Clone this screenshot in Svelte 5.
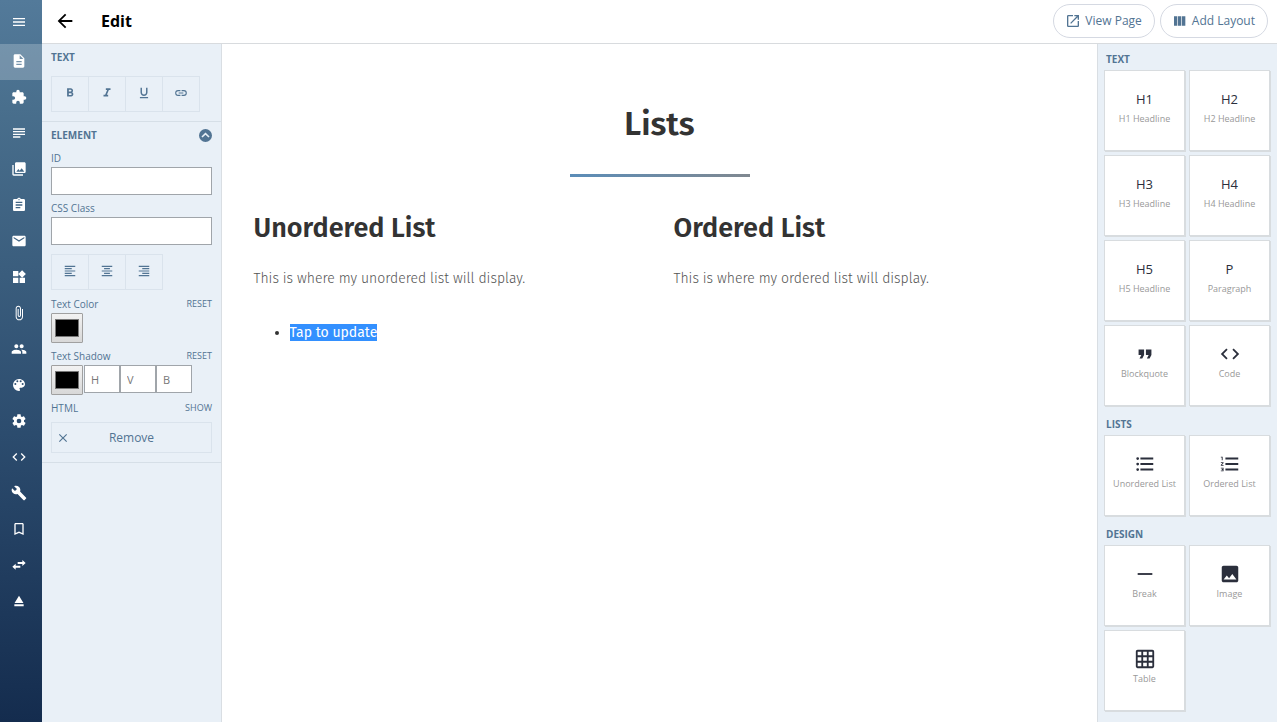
<script>
  const icons = {
    menu: 'M3 18h18v-2H3v2zm0-5h18v-2H3v2zm0-7v2h18V6H3z',
    page: 'M14 2H6c-1.1 0-2 .9-2 2v16c0 1.1.9 2 2 2h12c1.1 0 2-.9 2-2V8l-6-6zm2 16H8v-2h8v2zm0-4H8v-2h8v2zm-3-5V3.5L18.500 9H13z',
    puzzle: 'M20.5 11H19V7c0-1.100-.9-2-2-2h-4V3.500a2.500 2.500 0 0 0-5 0V5H4c-1.100 0-2 .9-2 2v3.800h1.500a2.700 2.700 0 0 1 0 5.400H2V20c0 1.100.9 2 2 2h3.800v-1.500a2.700 2.700 0 0 1 5.400 0V22H17c1.100 0 2-.9 2-2v-4h1.500a2.500 2.500 0 0 0 0-5z',
    lines: 'M14 17H3v2h11v-2zm7-8H3v2h18V9zM3 15h18v-2H3v2zM3 5v2h18V5H3z',
    photos: 'M22 16V4c0-1.100-.9-2-2-2H8c-1.100 0-2 .9-2 2v12c0 1.100.9 2 2 2h12c1.100 0 2-.9 2-2zm-11-4 2.030 2.710L16 11l4 5H8l3-4zM2 6v14c0 1.100.9 2 2 2h14v-2H4V6H2z',
    clipboard: 'M19 3h-4.180C14.400 1.840 13.300 1 12 1s-2.400.84-2.820 2H5c-1.100 0-2 .9-2 2v14c0 1.100.9 2 2 2h14c1.100 0 2-.9 2-2V5c0-1.100-.9-2-2-2zm-7 0c.55 0 1 .45 1 1s-.45 1-1 1-1-.45-1-1 .45-1 1-1zm2 14H7v-2h7v2zm3-4H7v-2h10v2zm0-4H7V7h10v2z',
    mail: 'M20 4H4c-1.100 0-2 .9-2 2v12c0 1.100.9 2 2 2h16c1.100 0 2-.9 2-2V6c0-1.100-.9-2-2-2zm0 4-8 5-8-5V6l8 5 8-5v2z',
    widgets: 'M13 13v8h8v-8h-8zM3 21h8v-8H3v8zM3 3v8h8V3H3zm13.660-1.310L11 7.340 16.660 13l5.660-5.660-5.660-5.650z',
    clip: 'M16.500 6v11.500c0 2.210-1.790 4-4 4s-4-1.790-4-4V5a2.500 2.500 0 0 1 5 0v10.500c0 .55-.45 1-1 1s-1-.45-1-1V6H10v9.500a2.500 2.500 0 0 0 5 0V5c0-2.210-1.790-4-4-4S7 2.790 7 5v12.500c0 3.040 2.460 5.500 5.500 5.500s5.500-2.460 5.500-5.500V6h-1.500z',
    people: 'M16 11c1.660 0 2.990-1.340 2.990-3S17.660 5 16 5s-3 1.340-3 3 1.340 3 3 3zm-8 0c1.660 0 2.990-1.340 2.990-3S9.660 5 8 5 5 6.340 5 8s1.340 3 3 3zm0 2c-2.330 0-7 1.170-7 3.500V19h14v-2.500c0-2.330-4.670-3.500-7-3.500zm8 0c-.29 0-.62.02-.97.05 1.160.84 1.970 1.970 1.970 3.450V19h6v-2.500c0-2.330-4.670-3.500-7-3.500z',
    palette: 'M12 3a9 9 0 0 0 0 18c.83 0 1.500-.67 1.500-1.500 0-.39-.15-.74-.39-1.010-.23-.26-.38-.61-.38-.99 0-.83.67-1.500 1.500-1.500H16c2.760 0 5-2.240 5-5 0-4.420-4.030-8-9-8zm-5.500 9a1.500 1.500 0 1 1 0-3 1.500 1.500 0 0 1 0 3zm3-4a1.500 1.500 0 1 1 0-3 1.500 1.500 0 0 1 0 3zm5 0a1.500 1.500 0 1 1 0-3 1.500 1.500 0 0 1 0 3zm3 4a1.500 1.500 0 1 1 0-3 1.500 1.500 0 0 1 0 3z',
    gear: 'M19.430 12.980c.04-.32.07-.64.07-.98s-.03-.66-.07-.98l2.110-1.650c.19-.15.24-.42.12-.64l-2-3.460c-.12-.22-.39-.3-.61-.22l-2.490 1c-.52-.4-1.080-.73-1.690-.98l-.38-2.650A.488.488 0 0 0 14 2h-4c-.25 0-.46.18-.49.42l-.38 2.650c-.61.25-1.170.59-1.690.98l-2.490-1c-.23-.09-.49 0-.61.22l-2 3.460c-.13.22-.07.49.12.64l2.110 1.650c-.04.32-.07.65-.07.98s.03.66.07.98l-2.110 1.650c-.19.15-.24.42-.12.64l2 3.460c.12.22.39.3.61.22l2.490-1c.52.4 1.080.73 1.690.98l.38 2.650c.03.24.24.42.49.42h4c.25 0 .46-.18.49-.42l.38-2.650c.61-.25 1.170-.59 1.690-.98l2.490 1c.23.09.49 0 .61-.22l2-3.460c.12-.22.07-.49-.12-.64l-2.110-1.650zM12 15.500a3.500 3.500 0 1 1 0-7 3.500 3.500 0 0 1 0 7z',
    code: 'M9.400 16.600 4.800 12l4.600-4.600L8 6l-6 6 6 6 1.400-1.400zm5.200 0 4.600-4.600-4.600-4.600L16 6l6 6-6 6-1.400-1.400z',
    wrench: 'm22.700 19-9.100-9.100c.9-2.300.4-5-1.500-6.900-2-2-5-2.400-7.400-1.300L9 6 6 9 1.600 4.700C.4 7.100.9 10.100 2.900 12.100c1.900 1.900 4.600 2.400 6.900 1.500l9.100 9.100c.4.4 1 .4 1.400 0l2.300-2.300c.5-.4.5-1.100.1-1.400z',
    bookmark: 'M17 3H7c-1.100 0-2 .9-2 2v16l7-3 7 3V5c0-1.100-.9-2-2-2zm0 15-5-2.180L7 18V5h10v13z',
    swap: 'M6.990 10 2 14.500l4.990 4.500v-3H14v-3H6.990v-3zM22 9l-4.990-4.500v3H10v3h7.010v3L22 9z',
    eject: 'M5 17h14v3H5zm7-13L5.330 15h13.340z',
    back: 'M20 11H7.830l5.590-5.590L12 4l-8 8 8 8 1.410-1.410L7.830 13H20v-2z',
    open: 'M19 19H5V5h7V3H5a2 2 0 0 0-2 2v14a2 2 0 0 0 2 2h14c1.100 0 2-.9 2-2v-7h-2v7zM14 3v2h3.590l-9.830 9.830 1.410 1.410L19 6.410V10h2V3h-7z',
    columns: 'M3 5h5v14H3zM9 5h5v14H9zM15 5h5v14h-5z',
    bold: 'M15.600 10.790c.97-.67 1.650-1.770 1.650-2.790 0-2.260-1.750-4-4-4H7v14h7.040c2.090 0 3.710-1.700 3.710-3.790 0-1.520-.86-2.820-2.150-3.420zM10 6.500h3c.83 0 1.500.67 1.500 1.500s-.67 1.500-1.500 1.500h-3v-3zm3.500 9H10v-3h3.500c.83 0 1.500.67 1.500 1.500s-.67 1.500-1.500 1.500z',
    italic: 'M10 4v3h2.210l-3.420 8H6v3h8v-3h-2.210l3.420-8H18V4z',
    underline: 'M12 17c3.310 0 6-2.690 6-6V3h-2.500v8a3.500 3.500 0 0 1-7 0V3H6v8c0 3.310 2.690 6 6 6zm-7 2v2h14v-2H5z',
    link: 'M3.900 12c0-1.710 1.390-3.100 3.100-3.100h4V7H7a5 5 0 0 0 0 10h4v-1.900H7c-1.710 0-3.100-1.390-3.100-3.100zM8 13h8v-2H8v2zm9-6h-4v1.900h4a3.100 3.100 0 0 1 0 6.200h-4V17h4a5 5 0 0 0 0-10z',
    left: 'M15 15H3v2h12v-2zm0-8H3v2h12V7zM3 13h18v-2H3v2zm0 8h18v-2H3v2zM3 3v2h18V3H3z',
    center: 'M7 15v2h10v-2H7zm-4 6h18v-2H3v2zm0-8h18v-2H3v2zm4-6v2h10V7H7zM3 3v2h18V3H3z',
    right: 'M3 21h18v-2H3v2zm6-4h12v-2H9v2zm-6-4h18v-2H3v2zm6-4h12V7H9v2zM3 3v2h18V3H3z',
    up: 'M12 0a12 12 0 1 0 0 24 12 12 0 0 0 0-24zm5.500 15.900L12 10.400l-5.500 5.500-2-2L12 6.400l7.500 7.500z',
    close: 'M19 6.410 17.590 5 12 10.590 6.410 5 5 6.410 10.590 12 5 17.590 6.410 19 12 13.410 17.590 19 19 17.590 13.410 12z',
    quote: 'M6 17h3l2-4V7H5v6h3zm8 0h3l2-4V7h-6v6h3z',
    bullets: 'M4 10.500a1.500 1.500 0 1 0 0 3 1.500 1.500 0 0 0 0-3zm0-6a1.500 1.500 0 1 0 0 3 1.500 1.500 0 0 0 0-3zm0 12a1.500 1.500 0 1 0 0 3 1.500 1.500 0 0 0 0-3zM7 19h14v-2H7v2zm0-6h14v-2H7v2zm0-8v2h14V5H7z',
    numbers: 'M2 17h2v.5H3v1h1v.5H2v1h3v-4H2v1zm1-9h1V4H2v1h1v3zm-1 3h1.800L2 13.100v.9h3v-1H3.200L5 10.900V10H2v1zm5-6v2h14V5H7zm0 14h14v-2H7v2zm0-6h14v-2H7v2z',
    dash: 'M4 11h16v2H4z',
    image: 'M21 19V5c0-1.100-.9-2-2-2H5c-1.100 0-2 .9-2 2v14c0 1.100.9 2 2 2h14c1.100 0 2-.9 2-2zM8.500 13.500l2.500 3.010L14.500 12l4.500 6H5l3.500-4.500z',
    table: 'M20 2H4c-1.100 0-2 .9-2 2v16c0 1.100.9 2 2 2h16c1.100 0 2-.9 2-2V4c0-1.100-.9-2-2-2zM8 20H4v-4h4v4zm0-6H4v-4h4v4zm0-6H4V4h4v4zm6 12h-4v-4h4v4zm0-6h-4v-4h4v4zm0-6h-4V4h4v4zm6 12h-4v-4h4v4zm0-6h-4v-4h4v4zm0-6h-4V4h4v4z'
  };

  const nav = ['page', 'puzzle', 'lines', 'photos', 'clipboard', 'mail', 'widgets', 'clip', 'people', 'palette', 'gear', 'code', 'wrench', 'bookmark', 'swap', 'eject'];

  const palette = [
    { title: 'TEXT', items: [
      { mark: 'H1', label: 'H1 Headline' }, { mark: 'H2', label: 'H2 Headline' },
      { mark: 'H3', label: 'H3 Headline' }, { mark: 'H4', label: 'H4 Headline' },
      { mark: 'H5', label: 'H5 Headline' }, { mark: 'P', label: 'Paragraph' },
      { icon: 'quote', label: 'Blockquote' }, { icon: 'code', label: 'Code' }
    ] },
    { title: 'LISTS', items: [{ icon: 'bullets', label: 'Unordered List' }, { icon: 'numbers', label: 'Ordered List' }] },
    { title: 'DESIGN', items: [{ icon: 'dash', label: 'Break' }, { icon: 'image', label: 'Image' }, { icon: 'table', label: 'Table' }] }
  ];
</script>

{#snippet icon(name, size)}
  <svg width={size} height={size} viewBox="0 0 24 24" fill="currentColor" aria-hidden="true"><path d={icons[name]} /></svg>
{/snippet}

<div class="app">
  <nav class="rail">
    <button class="menu" aria-label="menu">{@render icon('menu', 16)}</button>
    {#each nav as name, i}
      <a href="#{name}" class:active={i === 0} aria-label={name}>{@render icon(name, 16)}</a>
    {/each}
  </nav>

  <div class="work">
    <header>
      <button class="back" aria-label="back">{@render icon('back', 22)}</button>
      <h1>Edit</h1>
      <button class="pill">{@render icon('open', 16)}View Page</button>
      <button class="pill">{@render icon('columns', 16)}Add Layout</button>
    </header>

    <div class="body">
      <aside class="props">
        <section>
          <h2>TEXT</h2>
          <div class="group format">
            {#each ['bold', 'italic', 'underline', 'link'] as name}
              <button aria-label={name}>{@render icon(name, 14)}</button>
            {/each}
          </div>
        </section>
        <section>
          <div class="line heading">
            <h2>ELEMENT</h2>
            <button class="plain" aria-label="collapse">{@render icon('up', 13)}</button>
          </div>
          <div class="field">
            <label for="el-id">ID</label>
            <input id="el-id" type="text" />
          </div>
          <div class="field">
            <label for="el-class">CSS Class</label>
            <input id="el-class" type="text" />
          </div>
          <div class="group">
            {#each ['left', 'center', 'right'] as name}
              <button aria-label={name}>{@render icon(name, 14)}</button>
            {/each}
          </div>
          <div class="field">
            <div class="line"><label for="color">Text Color</label><button class="plain">RESET</button></div>
            <input id="color" type="color" value="#000000" />
          </div>
          <div class="field">
            <div class="line"><label for="shadow">Text Shadow</label><button class="plain">RESET</button></div>
            <div class="shadow">
              <input id="shadow" type="color" value="#000000" />
              <div class="offsets">
                <input type="text" placeholder="H" aria-label="H" />
                <input type="text" placeholder="V" aria-label="V" />
                <input type="text" placeholder="B" aria-label="B" />
              </div>
            </div>
          </div>
          <div class="line"><span>HTML</span><button class="plain">SHOW</button></div>
          <button class="remove">{@render icon('close', 14)}<span>Remove</span></button>
        </section>
      </aside>

      <main>
        <div class="title">
          <h2>Lists</h2>
          <hr />
        </div>
        <div class="columns">
          <article>
            <h3>Unordered List</h3>
            <p>This is where my unordered list will display.</p>
            <ul><li><mark>Tap to update</mark></li></ul>
          </article>
          <article>
            <h3>Ordered List</h3>
            <p>This is where my ordered list will display.</p>
          </article>
        </div>
      </main>

      <aside class="blocks">
        {#each palette as group}
          <section>
            <h2>{group.title}</h2>
            <div class="cards">
              {#each group.items as item}
                <button>
                  <span class="glyph">{#if item.icon}{@render icon(item.icon, 22)}{:else}{item.mark}{/if}</span>
                  <span class="name">{item.label}</span>
                </button>
              {/each}
            </div>
          </section>
        {/each}
      </aside>
    </div>
  </div>
</div>

<style>
  :global(body) { margin: 0; }
  * { box-sizing: border-box; }
  h1, h2, h3, p, ul { margin: 0; padding: 0; }
  button, input { font: inherit; color: inherit; margin: 0; border-radius: 0; }
  button { background: none; border: 0; padding: 0; cursor: pointer; }
  svg { display: block; flex: none; }

  .app {
    display: flex;
    min-height: 100vh;
    background: #fff;
    color: #527493;
    font: 12px/16px "Open Sans", "Noto Sans", sans-serif;
  }
  .rail {
    flex: 0 0 42px;
    display: flex;
    flex-direction: column;
    color: #fff;
    background: linear-gradient(#537a9a, #496f8d 15%, #2c4c6e 60%, #142c4e);
  }
  .rail a, .rail button {
    display: flex;
    align-items: center;
    justify-content: center;
    height: 36px;
    padding: 0 4px 2px 0;
    color: #fff;
  }
  .rail .menu { height: 44px; padding-bottom: 0; }
  .rail .active { background: rgba(255, 255, 255, 0.22); }

  .work { flex: 1; min-width: 0; display: flex; flex-direction: column; }
  header {
    display: flex;
    align-items: center;
    gap: 5px;
    height: 44px;
    padding: 0 9px 2px 12px;
    border-bottom: 1px solid #d8dbde;
  }
  header h1 {
    flex: 1;
    padding-left: 20px;
    font-size: 16px;
    line-height: 22px;
    font-weight: 700;
    color: #000;
  }
  .back { color: #000; }
  .pill {
    display: flex;
    align-items: center;
    gap: 4px;
    height: 34px;
    padding: 0 12px 0 11px;
    border: 1px solid #d5d9e2;
    border-radius: 17px;
  }

  .body { flex: 1; display: flex; }
  aside { flex: 0 0 180px; background: #e9f0f7; }
  aside h2 { font-size: 10px; line-height: 14px; font-weight: 700; }

  .props { border-right: 1px solid #d9dee3; font-size: 10px; line-height: 14px; }
  .props section {
    display: flex;
    flex-direction: column;
    padding: 6px 9px 9px;
    border-bottom: 1px solid #d6dfe7;
  }
  .line { display: flex; align-items: center; justify-content: space-between; }
  .line .plain { font-size: 9px; }
  .heading { margin-bottom: 9px; }
  .field { display: flex; flex-direction: column; gap: 2px; margin-bottom: 6px; }
  .group { display: flex; align-self: flex-start; margin: 3px 0 7px; border-right: 1px solid #dae3ec; }
  .format { margin: 12px 0 0; }
  .group button {
    display: flex;
    align-items: center;
    justify-content: center;
    width: 37px;
    height: 36px;
    padding-bottom: 2px;
    border: 1px solid #dae3ec;
    border-right: 0;
  }
  input[type='text'] {
    width: 100%;
    height: 28px;
    padding: 0 6px;
    background: #fff;
    border: 1px solid #a0a5aa;
    font-size: 11px;
  }
  input::placeholder { color: #777; opacity: 1; }
  input[type='color'] {
    appearance: none;
    width: 32px;
    height: 30px;
    padding: 5px 3px;
    border: 1px solid #a0a0a0;
    border-radius: 1px;
    background: linear-gradient(#f2f2f2, #d8d8d8);
  }
  input[type='color']::-webkit-color-swatch-wrapper { padding: 0; }
  input[type='color']::-webkit-color-swatch { border: 1px solid #777; }
  .shadow { display: flex; gap: 1px; }
  .offsets { display: flex; }
  .offsets input[type='text'] { width: 36px; }
  .remove {
    display: flex;
    align-items: center;
    height: 31px;
    margin-top: 7px;
    padding: 0 18px 0 4px;
    border: 1px solid #dae3ec;
    font-size: 12px;
  }
  .remove span { flex: 1; }

  main { flex: 1; min-width: 0; padding: 56px 16px; color: #333; font-family: "Fira Sans", "Noto Sans", sans-serif; }
  .title { text-align: center; }
  .title h2 { font-size: 33px; line-height: 48px; font-weight: 600; }
  hr { width: 180px; height: 3px; margin: 26px auto 0; border: 0; background: linear-gradient(90deg, #5b8db8, #808890); }
  .columns { display: grid; grid-template-columns: 1fr 1fr; max-width: 840px; margin: 33px auto 0; }
  article { padding: 0 14px; }
  article h3 { font-size: 27px; line-height: 36px; font-weight: 600; }
  article p { margin-top: 21px; font-size: 14px; line-height: 24px; font-weight: 300; color: #555; }
  ul { margin-top: 30px; padding-left: 36px; font-size: 14px; line-height: 24px; }
  mark { background: #3390ff; color: #fff; }

  .blocks { border-left: 1px solid #d9dee3; padding: 8px 7px 8px 6px; display: flex; flex-direction: column; gap: 11px; }
  .blocks h2 { padding: 0 2px 4px; }
  .cards { display: grid; grid-template-columns: 1fr 1fr; gap: 4px; }
  .cards button {
    display: flex;
    flex-direction: column;
    align-items: center;
    height: 81px;
    padding-top: 17px;
    background: #fff;
    border: 1px solid #d8dcdf;
    box-shadow: 1px 1px #d8dcdf;
  }
  .glyph { display: flex; align-items: center; height: 22px; margin-bottom: 2px; font-size: 13px; color: #2b2f3c; }
  .name { font-size: 9px; line-height: 14px; color: #999; white-space: nowrap; }
</style>
